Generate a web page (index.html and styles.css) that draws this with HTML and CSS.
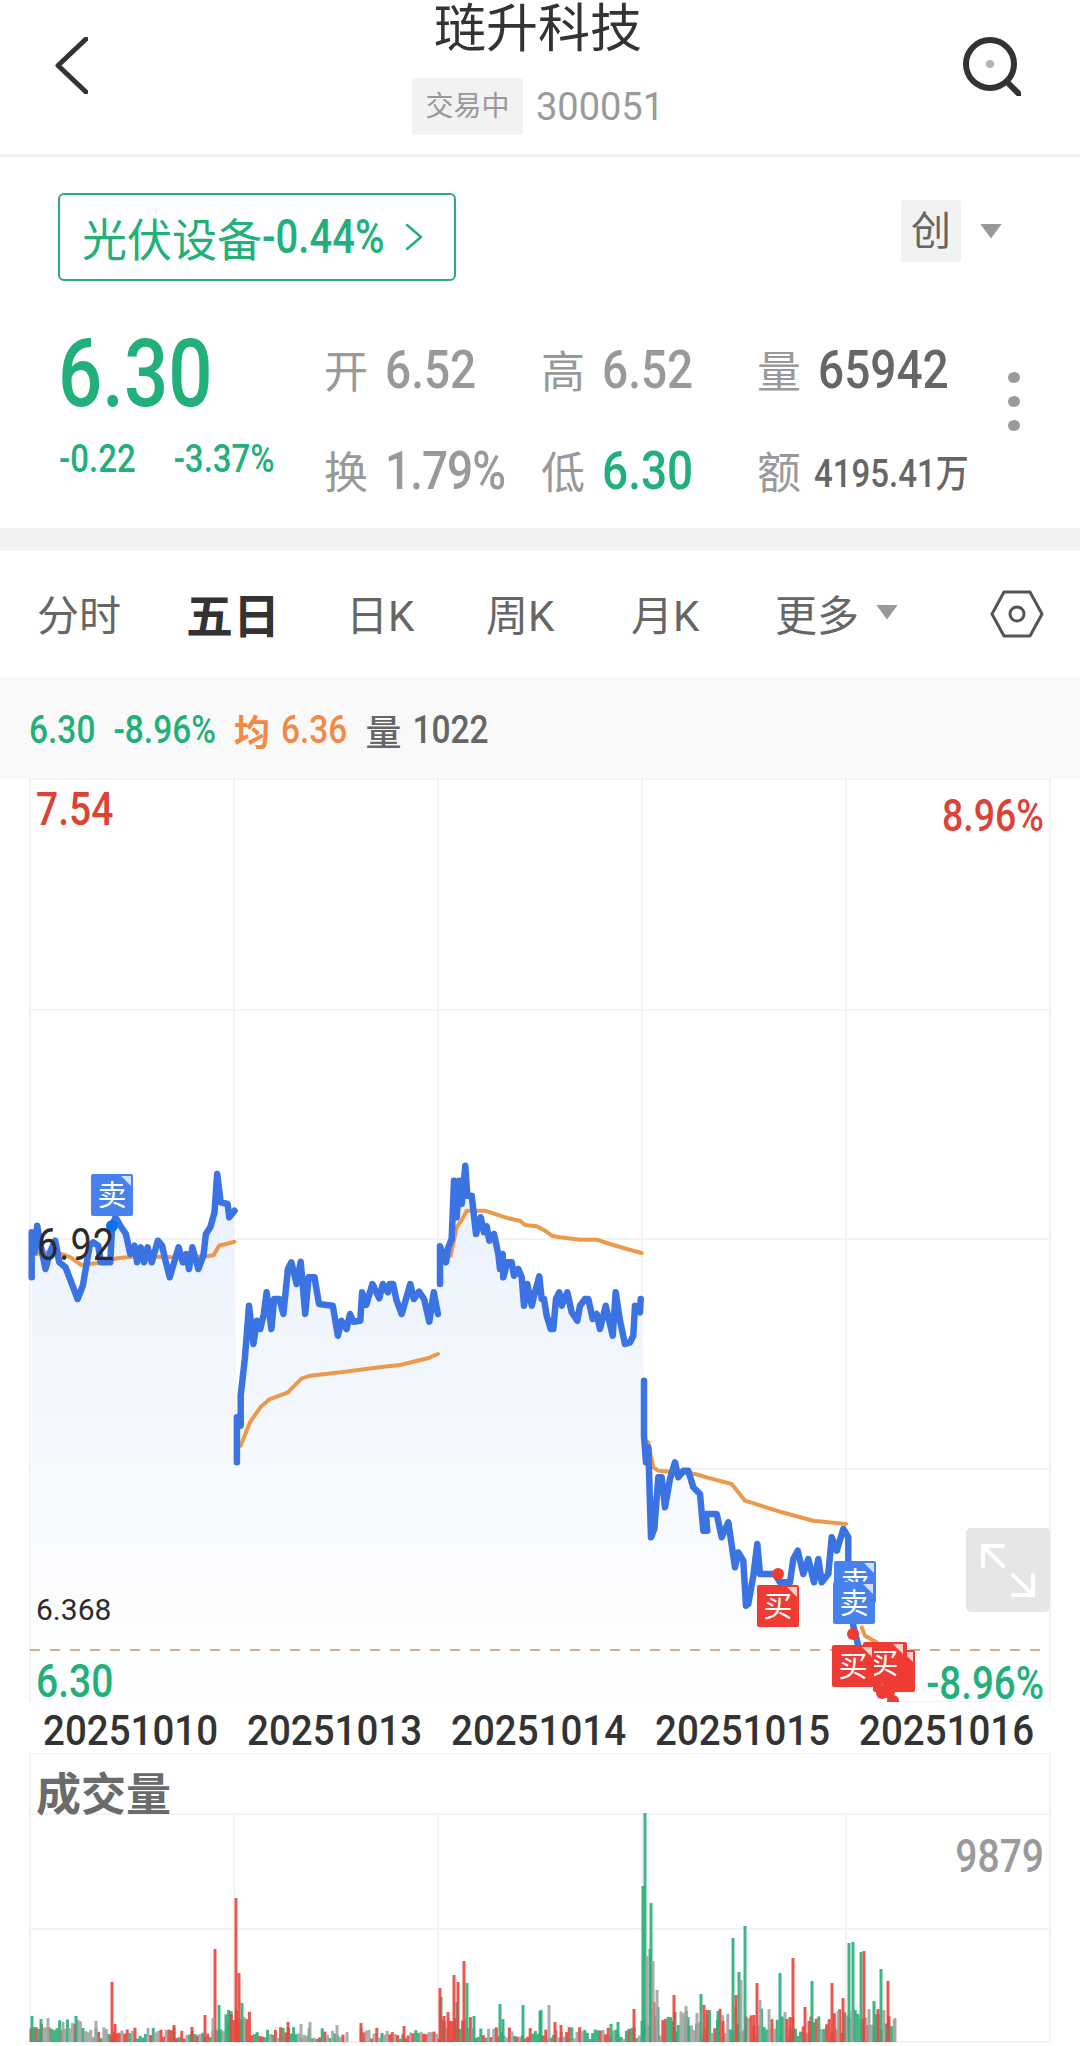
FILE: index.html
```html
<!DOCTYPE html>
<html lang="zh-CN">
<head>
    <meta charset="UTF-8">
    <meta name="viewport" content="width=device-width, initial-scale=1.0">
    <title>琏升科技 300051</title>
    <link rel="stylesheet" href="styles.css">
</head>
<body>
<header class="topbar">
    <svg class="back-icon" viewBox="0 0 33 57"><path d="M31 2 3 28.5 31 55"/></svg>
    <div class="title-block">
        <h1>琏升科技</h1>
        <div class="sub-row"><span class="status-tag">交易中</span><span class="code">300051</span></div>
    </div>
    <svg class="search-icon" viewBox="0 0 58 60"><circle class="lens" cx="27" cy="28" r="24"/><path class="handle" d="M44 46 56 58"/><circle class="dot" cx="27" cy="28" r="4"/></svg>
</header>

<section class="quote">
    <div class="sector-row">
        <a class="sector">光伏设备<span class="sector-pct tall">-0.44%</span><svg viewBox="0 0 18 28"><path d="M2 2 16 14 2 26"/></svg></a>
        <div class="board"><span class="board-tag">创</span><i class="tri"></i></div>
    </div>
    <div class="stats">
        <div class="price-cell">
            <span class="price"><span class="tall-big">6.30</span></span>
            <div class="change"><span class="tall">-0.22</span><span class="tall">-3.37%</span></div>
        </div>
        <div class="stat"><span class="lbl">开</span><span class="val tall">6.52</span></div>
        <div class="stat"><span class="lbl">高</span><span class="val tall">6.52</span></div>
        <div class="stat"><span class="lbl">量</span><span class="val tall dark">65942</span></div>
        <div class="more-dots"><i></i><i></i><i></i></div>
        <div class="stat"><span class="lbl">换</span><span class="val tall tight">1.79%</span></div>
        <div class="stat"><span class="lbl">低</span><span class="val tall green">6.30</span></div>
        <div class="stat amount"><span class="lbl">额</span><span class="val tall dark small">4195.41万</span></div>
    </div>
</section>

<nav class="tabs">
    <span>分时</span>
    <span class="active">五日</span>
    <span>日K</span>
    <span>周K</span>
    <span>月K</span>
    <span class="more">更多<i class="tri"></i></span>
    <svg class="hex-icon" viewBox="0 0 54 48"><path d="M14 2h26l12 22-12 22H14L2 24z"/><circle cx="27" cy="24" r="7"/></svg>
</nav>

<div class="info-band">
    <span class="green tall">6.30</span>
    <span class="green tall">-8.96%</span>
    <b class="orange">均</b>
    <span class="orange tall">6.36</span>
    <span class="gray-lbl">量</span>
    <span class="gray-val tall">1022</span>
</div>

<div class="price-chart">
    <svg id="price-svg" viewBox="0 780 1080 923" width="1080" height="923"></svg>
    <span class="axis red top-left tall">7.54</span>
    <span class="axis red top-right tall">8.96%</span>
    <span class="axis prev tall">6.92</span>
    <span class="axis avg-val">6.368</span>
    <span class="axis green low-left tall">6.30</span>
    <span class="axis green low-right tall">-8.96%</span>
    <div class="expand">
        <svg viewBox="0 0 84 84"><path d="M17 18 37 38M17 18h20M17 18v20M67 67 47 47M67 67H47M67 67V47"/></svg>
    </div>
</div>

<div class="dates">
    <span>20251010</span>
    <span>20251013</span>
    <span>20251014</span>
    <span>20251015</span>
    <span>20251016</span>
</div>

<div class="vol-chart">
    <svg id="vol-svg" viewBox="0 1754 1080 292" width="1080" height="292"></svg>
    <span class="vol-title">成交量</span>
    <span class="vol-max tall">9879</span>
</div>

<script src="script.js"></script>
</body>
</html>
```
FILE: styles.css
```css
* { box-sizing: border-box; }

body {
    margin: 0;
    width: 1080px;
    height: 2046px;
    overflow: hidden;
    background: #ffffff;
    font-family: Roboto, "Noto Sans CJK SC", sans-serif;
    color: #333333;
}

/* stretched digits, the app uses a narrow DIN style face */
.tall { display: inline-block; transform: scaleY(1.18); }
.tall-big { display: inline-block; transform: scaleY(1.22); }

.green { color: #22b07a; }
.orange { color: #f08a45; }
.red { color: #dc4238; }

.tri {
    display: inline-block;
    width: 22px;
    height: 15px;
    background: #999999;
    clip-path: polygon(0 0, 100% 0, 50% 100%);
}

/* header */
.topbar {
    display: grid;
    grid-template-columns: 1fr auto 1fr;
    height: 157px;
    padding: 0 59px 0 55px;
    border-bottom: 3px solid #f2f2f2;
}

.back-icon { width: 33px; height: 57px; margin-top: 37px; }
.back-icon path { fill: none; stroke: #333333; stroke-width: 5; stroke-linecap: round; stroke-linejoin: round; }

.search-icon { width: 58px; height: 60px; margin-top: 36px; justify-self: end; }
.lens { fill: none; stroke: #333333; stroke-width: 6; }
.handle { fill: none; stroke: #333333; stroke-width: 6; stroke-linecap: round; }
.search-icon .dot { fill: #b5b5b5; }

.title-block { display: flex; flex-direction: column; align-items: center; }

h1 {
    margin: 0;
    padding-top: 4px;
    font-size: 52px;
    line-height: 52px;
    font-weight: 400;
    color: #333333;
}

.sub-row { display: flex; align-items: center; margin-top: 22px; }

.status-tag {
    width: 111px;
    height: 57px;
    line-height: 57px;
    text-align: center;
    background: #f2f2f2;
    border-radius: 4px;
    font-size: 28px;
    color: #999999;
}

.code { margin-left: 13px; font-size: 38px; color: #9a9a9a; }

/* quote block */
.quote { height: 371px; padding-top: 36px; }

.sector-row {
    display: flex;
    justify-content: space-between;
    align-items: flex-start;
    height: 87px;
    padding: 0 78px 0 58px;
}

.sector {
    display: flex;
    align-items: center;
    width: 398px;
    height: 88px;
    padding-left: 22px;
    border: 2px solid #2bab7c;
    border-radius: 6px;
    font-size: 45px;
    color: #22b07a;
    white-space: nowrap;
}

.sector-pct { font-size: 40px; font-weight: 500; }
.sector svg { width: 18px; height: 28px; margin-left: 21px; }
.sector path { fill: none; stroke: #22b07a; stroke-width: 2.5; stroke-linecap: round; stroke-linejoin: round; }

.board { display: flex; align-items: center; gap: 19px; margin-top: 7px; }

.board-tag {
    width: 60px;
    height: 62px;
    line-height: 64px;
    text-align: center;
    background: #f2f2f2;
    border-radius: 3px;
    font-size: 40px;
    color: #666666;
}

.stats {
    display: grid;
    grid-template-columns: 265px 217px 216px 220px 1fr;
    grid-template-rows: 100px 100px;
    margin-top: 38px;
    padding-left: 58px;
}

.price-cell { grid-row: 1 / 3; display: flex; flex-direction: column; }

.price {
    height: 108px;
    line-height: 112px;
    font-size: 78px;
    font-weight: 500;
    color: #22b07a;
}

.change {
    display: flex;
    gap: 38px;
    margin-top: 13px;
    padding-left: 1px;
    font-size: 33px;
    font-weight: 500;
    color: #22b07a;
}

.stat { display: flex; align-items: center; gap: 17px; padding-top: 1px; margin-left: 1px; }
.lbl { font-size: 44px; color: #999999; }
.val { font-size: 46px; color: #999999; font-weight: 500; white-space: nowrap; }
.val.green { color: #22b07a; }
.val.dark { color: #666666; }
.val.small { font-size: 33px; }
.val.tight { letter-spacing: -1px; }
.stats .stat:nth-child(n+6) { padding-top: 4px; }
.amount { gap: 13px; }

.more-dots {
    grid-row: 1 / 3;
    grid-column: 5;
    display: flex;
    flex-direction: column;
    gap: 13px;
    padding: 54px 0 0 32px;
}

.more-dots i { width: 12px; height: 11px; border-radius: 50%; background: #999999; }

/* tabs */
.tabs {
    display: grid;
    grid-template-columns: 149px 160px 140px 145px 144px 215px 1fr;
    align-items: center;
    height: 149px;
    padding: 0 0 4px 37px;
    border-top: 23px solid #f2f2f2;
    font-size: 42px;
    color: #666666;
}

.tabs .active { font-size: 47px; font-weight: 700; color: #333333; }
.tabs .more { display: flex; align-items: center; gap: 17px; }
.hex-icon { width: 54px; height: 48px; margin-top: 4px; }
.hex-icon path, .hex-icon circle { fill: none; stroke: #555555; stroke-width: 3; stroke-linejoin: round; }

/* info band */
.info-band {
    display: flex;
    align-items: center;
    height: 102px;
    padding: 3px 0 0 29px;
    background: #f9f9f9;
    font-size: 33.5px;
    font-weight: 500;
    white-space: nowrap;
}

.info-band > * { margin-right: 18px; }
.info-band b { font-size: 36px; margin-right: 11px; }
.gray-lbl { font-size: 36px; color: #666666; margin-right: 11px !important; }
.gray-val { color: #666666; }

/* charts */
.price-chart, .vol-chart { position: relative; }
.price-chart { height: 923px; }
.vol-chart { height: 292px; }
.price-chart svg, .vol-chart svg { display: block; }

.grid-line { stroke: #f3f3f3; stroke-width: 2; fill: none; }
.dash-line { stroke: #d6ab8c; stroke-width: 2; stroke-dasharray: 10 10; fill: none; }
.price-line { stroke: #3b73e2; stroke-width: 6.5; fill: none; stroke-linejoin: round; stroke-linecap: round; }
.avg-line { stroke: #eb9a4c; stroke-width: 4; fill: none; stroke-linejoin: round; stroke-linecap: round; }
.mark-label { font-size: 29px; fill: #ffffff; text-anchor: middle; font-family: "Noto Sans CJK SC", sans-serif; }
.mark-corner { fill: #ffffff; opacity: 0.75; }

.axis { position: absolute; white-space: nowrap; line-height: 40px; font-weight: 500; }
.top-left { left: 36px; top: 11px; font-size: 39px; }
.top-right { right: 36px; top: 17px; font-size: 37.5px; }
.prev { left: 37px; top: 446px; font-size: 38px; font-weight: 400; letter-spacing: 1px; color: #2b2b2b; }
.avg-val { left: 36px; top: 811px; font-size: 30px; font-weight: 400; color: #2b2b2b; }
.low-left { left: 36px; top: 883px; font-size: 39px; }
.low-right { right: 36px; top: 885px; font-size: 38.5px; }

.expand {
    position: absolute;
    left: 966px;
    top: 749px;
    width: 84px;
    height: 84px;
    border-radius: 5px;
    background: #e6e6e6;
}

.expand svg { width: 84px; height: 84px; }
.expand path { fill: none; stroke: #ffffff; stroke-width: 4; stroke-linecap: round; }

.dates {
    display: grid;
    grid-template-columns: repeat(5, 204px);
    align-items: center;
    height: 51px;
    padding: 6px 0 0 43px;
    font-size: 38.5px;
    font-weight: 500;
    color: #333333;
}

.dates span { display: inline-block; transform: scaleY(1.1); }

.vol-title {
    position: absolute;
    left: 36px;
    top: 18px;
    font-size: 45px;
    line-height: 50px;
    font-weight: 700;
    color: #6b6b6b;
}

.vol-max { position: absolute; right: 36px; top: 80px; font-size: 39px; line-height: 48px; font-weight: 500; color: #9a9a9a; }
```
FILE: script.js
```js
const NS = 'http://www.w3.org/2000/svg';

function add(svg, tag, attrs, text) {
    const el = document.createElementNS(NS, tag);
    for (const k in attrs) el.setAttribute(k, attrs[k]);
    if (text) el.textContent = text;
    svg.appendChild(el);
    return el;
}

// points were read off crops, so each run has its own origin and scale
function toPage(flat, ox, oy, sx, sy) {
    const out = [];
    for (let i = 0; i < flat.length; i += 2) out.push([ox + flat[i] * sx, oy + flat[i + 1] * sy]);
    return out;
}

const A = [0, 1140, 1 / 2.9, 1 / 3];
const B = [420, 1140, 1 / 3, 1 / 3];
const C = [620, 1380, 1 / 3, 1 / 3];

const day1 = toPage([92,415,92,280,100,340,108,260,120,330,132,390,145,340,160,305,172,370,190,385,205,425,225,480,240,440,260,320,270,310,285,320,292,370,320,370,325,260,335,235,350,262,365,285,378,345,390,320,398,370,408,325,418,370,428,325,440,370,458,305,470,320,480,365,492,415,505,370,518,325,530,370,540,345,548,390,558,325,575,390,590,350,597,285,610,265,622,220,630,105,640,190,660,195,665,235,680,215], ...A);
const day2 = toPage([687,970,687,835,698,860,698,770,710,660,722,500,735,615,745,545,755,570,765,525,773,460,787,570,795,480,810,480,822,525,835,390,845,370,860,435,872,368,885,525,895,415,912,415,925,495,965,500,980,590,990,545,1005,570,1015,525,1025,548,1045,545,1050,460,1062,498,1080,435,1100,478,1110,435,1125,460,1130,435,1140,435,1150,485,1165,525,1190,435,1200,480,1215,458,1230,480,1245,548,1258,460,1270,525], ...A);
const day3 = toPage([60,435,60,322,78,370,85,325,95,300,102,125,110,235,118,125,125,195,136,80,142,170,155,170,168,285,182,235,192,280,200,262,208,305,222,285,235,345,240,390,248,345,250,415,262,370,275,370,282,410,295,390,305,415,312,500,322,435,335,500,345,460,358,412,365,480,372,480,380,530,392,570,400,570,408,480,418,460,425,500,442,460,455,520,472,545,480,500,495,480,505,480,518,540,530,525,540,570,557,500,578,590,587,460,600,545,615,615,630,610,640,590,645,500,660,520,662,480], ...B);
const day4 = toPage([72,5,72,170,78,250,85,205,93,475,103,450,115,295,125,295,135,385,150,300,165,250,175,295,190,275,205,275,220,325,240,345,250,455,262,455,258,405,290,405,305,475,325,430,345,565,355,520,370,545,378,680,385,675,400,590,412,495,420,585,465,585,480,610,510,610,520,540,533,515,550,585,565,540,582,610,595,540,605,610,625,585,635,475,650,515,670,450,685,475,685,545,700,740,715,800,780,930,820,960], ...C);

const avgs = [
    toPage([105,345,130,340,180,345,205,355,235,378,285,372,340,358,400,352,500,355,600,352,620,348,635,320,680,308], ...A),
    toPage([698,920,725,850,755,805,780,782,835,760,875,718,900,710,1000,698,1100,685,1160,678,1240,658,1270,645], ...A),
    toPage([92,350,110,265,130,235,140,215,195,215,265,238,300,245,315,258,350,262,375,275,395,290,420,295,480,302,530,302,570,315,620,330,665,342], ...B),
    toPage([85,190,100,265,115,275,225,285,260,295,335,315,375,365,480,398,580,425,678,435], ...C),
    toPage([725,745,735,770,770,790], ...C)
];

const pts = a => a.map(p => p[0].toFixed(1) + ',' + p[1].toFixed(1)).join(' ');

function drawGrid(svg, hs, top, bottom) {
    hs.forEach(y => add(svg, 'line', { class: 'grid-line', x1: 30, x2: 1050, y1: y, y2: y }));
    [30, 1050].forEach(x => add(svg, 'line', { class: 'grid-line', x1: x, x2: x, y1: hs[0], y2: bottom }));
    [234, 438, 642, 846].forEach(x => add(svg, 'line', { class: 'grid-line', x1: x, x2: x, y1: top, y2: bottom }));
}

function marker(svg, kind, x, y) {
    const fill = kind === '买' ? '#ee3b33' : '#4781ec';
    add(svg, 'rect', { x, y, width: 42, height: 42, rx: 2, fill });
    add(svg, 'polygon', { class: 'mark-corner', points: (x + 30) + ',' + (y + 2) + ' ' + (x + 40) + ',' + (y + 2) + ' ' + (x + 40) + ',' + (y + 12) });
    add(svg, 'text', { class: 'mark-label', x: x + 21, y: y + 32 }, kind);
}

// price chart
const price = document.getElementById('price-svg');
const defs = add(price, 'defs', {});
const grad = add(defs, 'linearGradient', { id: 'area', gradientUnits: 'userSpaceOnUse', x1: 0, y1: 1180, x2: 0, y2: 1703 });
add(grad, 'stop', { offset: 0, 'stop-color': '#ebf2fd' });
add(grad, 'stop', { offset: 1, 'stop-color': '#ffffff' });

drawGrid(price, [780, 1011, 1240, 1470, 1703], 780, 1703);

const allPrice = day1.concat(day2, day3, day4);
add(price, 'polygon', { fill: 'url(#area)', points: pts(allPrice) + ' 893,1703 32,1703' });
avgs.forEach(a => add(price, 'polyline', { class: 'avg-line', points: pts(a) }));
add(price, 'polyline', { class: 'price-line', points: pts(day1) });
add(price, 'polyline', { class: 'price-line', points: pts(day2) });
add(price, 'polyline', { class: 'price-line', points: pts(day3) });
add(price, 'polyline', { class: 'price-line', points: pts(day4) });
add(price, 'line', { class: 'dash-line', x1: 30, x2: 1050, y1: 1651, y2: 1651 });

add(price, 'circle', { cx: 112, cy: 1227, r: 6, fill: '#0a72f0' });
add(price, 'circle', { cx: 778, cy: 1575, r: 6, fill: '#ee3b33' });
add(price, 'circle', { cx: 853, cy: 1635, r: 6, fill: '#ee3b33' });
add(price, 'circle', { cx: 882, cy: 1694, r: 6, fill: '#ee3b33' });
add(price, 'circle', { cx: 889, cy: 1693, r: 6, fill: '#ee3b33' });
add(price, 'circle', { cx: 893, cy: 1702, r: 6, fill: '#ee3b33' });

marker(price, '卖', 91, 1175);
marker(price, '买', 757, 1586);
marker(price, '卖', 834, 1562);
marker(price, '卖', 833, 1583);
marker(price, '买', 873, 1651);
marker(price, '买', 865, 1643);
marker(price, '买', 863, 1643);
marker(price, '买', 832, 1646);

// volume chart
const vol = document.getElementById('vol-svg');
drawGrid(vol, [1754, 1815, 1930, 2043], 1815, 2043);

const COLORS = { r: '#e8453c', g: '#2aae78', a: '#a3a3a3' };
const keys = ['g', 'r', 'a', 'g', 'a', 'r'];

function bar(x, top, color) {
    add(vol, 'rect', { x: x - 1.5, y: top, width: 3, height: 2043 - top, fill: COLORS[color], opacity: 0.9 });
}

// low bars under the spikes, fixed seed so the picture stays the same
let seed = 51;
function rnd() {
    seed = (seed * 1103515245 + 12345) % 2147483648;
    return seed / 2147483648;
}
for (let x = 31; x <= 895; x += 2.6) {
    let h = 3 + rnd() * 12;
    if (x < 85) h += 8;
    if (x > 640) h += rnd() * 22;
    if (x > 345 && x < 360) h = 0;
    if (x > 225 && x < 250) h += 18;
    if (x > 440 && x < 475) h += 10;
    if (h > 0) bar(x, 2043 - h, keys[Math.floor(rnd() * keys.length)]);
}

const spikes = {
    a: [48,2019,96,2022,63,2023,301,2025,310,2023,337,2026,347,2033,213,2019,647,1957,653,1962,657,1991,741,1981,549,2006,686,2007,697,2014,760,2001,769,2010,852,2012,838,2012,895,2019,869,2010],
    g: [219,2006,242,2004,441,1998,467,1984,457,2003,500,2005,523,2006,503,2020,76,2017,41,2020,32,2017,228,2023,474,2017,540,2012,645,1814,643,1887,651,1904,650,1950,733,1939,745,1927,739,1973,780,1974,812,1982,849,1944,853,1943,881,1970,861,1953,701,1995,658,2008,541,2011,718,2012,874,2002,611,2025,618,2023,688,2018,675,2013],
    r: [112,1983,215,1950,236,1899,239,1974,205,2016,115,2025,174,2026,192,2028,231,2015,288,2023,361,2024,404,2027,440,1989,454,1976,458,1983,464,1962,448,2013,444,2017,864,1952,793,1959,832,1984,757,1984,888,1982,805,2008,843,1999,634,2010,674,1996,704,2006,707,2011,736,1996,654,2003,809,2022,790,2018,787,2020,723,2022,754,2016,878,2010,555,2023,561,2026]
};
['g', 'r', 'a'].forEach(c => {
    for (let i = 0; i < spikes[c].length; i += 2) bar(spikes[c][i], spikes[c][i + 1], c);
});
```
